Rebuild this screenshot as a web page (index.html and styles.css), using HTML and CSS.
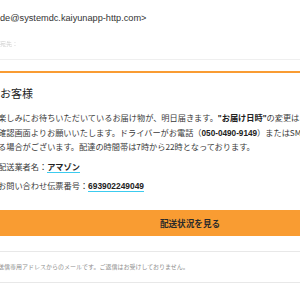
FILE: index.html
```html
<!DOCTYPE html>
<html lang="ja">
<head>
<meta charset="utf-8">
<link rel="stylesheet" href="styles.css">
</head>
<body>
<div class="page">
  <div class="from">de@systemdc.kaiyunapp-http.com&gt;</div>
  <div class="to"><span class="blur">宛先：</span></div>
  <div class="rule"></div>
  <div class="mail">
    <h1 class="greet">お客様</h1>
    <p class="body">
      <span class="line">楽しみにお待ちいただいているお届け物が、明日届きます。<b>"お届け日時"</b>の変更はお客様</span>
      <span class="line">確認画面よりお願いいたします。ドライバーがお電話（<b>050-0490-9149</b>）またはSMSでご連絡す</span>
      <span class="line">る場合がございます。配達の時間帯は7時から22時となっております。</span>
    </p>
    <div class="info">
      <div class="row">配送業者名：<span class="val">アマゾン</span></div>
      <div class="row">お問い合わせ伝票番号：<span class="val num">693902249049</span></div>
    </div>
    <div class="btn">配送状況を見る</div>
    <div class="foot">送信専用アドレスからのメールです。ご返信はお受けしておりません。</div>
  </div>
</div>
</body>
</html>
```
FILE: styles.css
```css
html, body {
  margin: 0;
  padding: 0;
  background: #fff;
  overflow: hidden;
}
.page {
  width: 300px;
  height: 300px;
  overflow: hidden;
  font-family: "Liberation Sans", "Noto Sans CJK JP", sans-serif;
  color: #333;
}
.from {
  padding-top: 12px;
  font-size: 9.2px;
  line-height: 12px;
  height: 12px;
  white-space: nowrap;
  color: #333;
}
.to {
  margin-top: 16px;
  height: 7px;
  line-height: 7px;
  font-size: 6px;
  overflow: hidden;
  font-family: "Noto Sans CJK JP", sans-serif;
}
.blur {
  color: #cfcfcf;
  filter: blur(0.6px);
}
.rule {
  margin-top: 12px;
  height: 1px;
  background: #efefef;
}
.mail {
  margin-top: 11px;
  margin-left: -2px;
  width: 384px;
  border-top: 2px solid #f99c32;
  font-family: "Noto Sans CJK JP", sans-serif;
}
.greet {
  margin: 12px 0 0 2px;
  height: 16px;
  font-size: 11px;
  line-height: 16px;
  font-weight: 400;
  color: #222;
}
.body {
  margin: 9.4px 0 0 0;
  font-size: 8.2px;
  line-height: 14.25px;
  color: #3a3a3a;
}
.line {
  display: block;
  height: 14.25px;
  white-space: nowrap;
}
.body b {
  font-family: "Liberation Sans", "Noto Sans CJK JP", sans-serif;
  font-weight: 700;
  line-height: 1;
  color: #222;
}
.info {
  margin-top: 3.4px;
  font-size: 8.2px;
  color: #3a3a3a;
}
.row {
  height: 19px;
  line-height: 19px;
  white-space: nowrap;
}
.val {
  font-weight: 700;
  color: #222;
  line-height: 1;
  border-bottom: 1.5px solid #3ccbef;
  padding-bottom: 0.5px;
}
.num {
  font-family: "Liberation Sans", sans-serif;
  font-size: 8.4px;
}
.btn {
  margin-top: 15.5px;
  height: 26px;
  line-height: 26px;
  background: #f99c32;
  text-align: center;
  font-size: 8.6px;
  font-weight: 700;
  color: #2a2a2a;
}
.foot {
  margin-top: 15px;
  border-top: 1px solid #e8e8e8;
  border-bottom: 1px solid #e8e8e8;
  height: 30px;
  line-height: 30px;
  font-size: 6px;
  color: #8f8f8f;
  white-space: nowrap;
}
```
